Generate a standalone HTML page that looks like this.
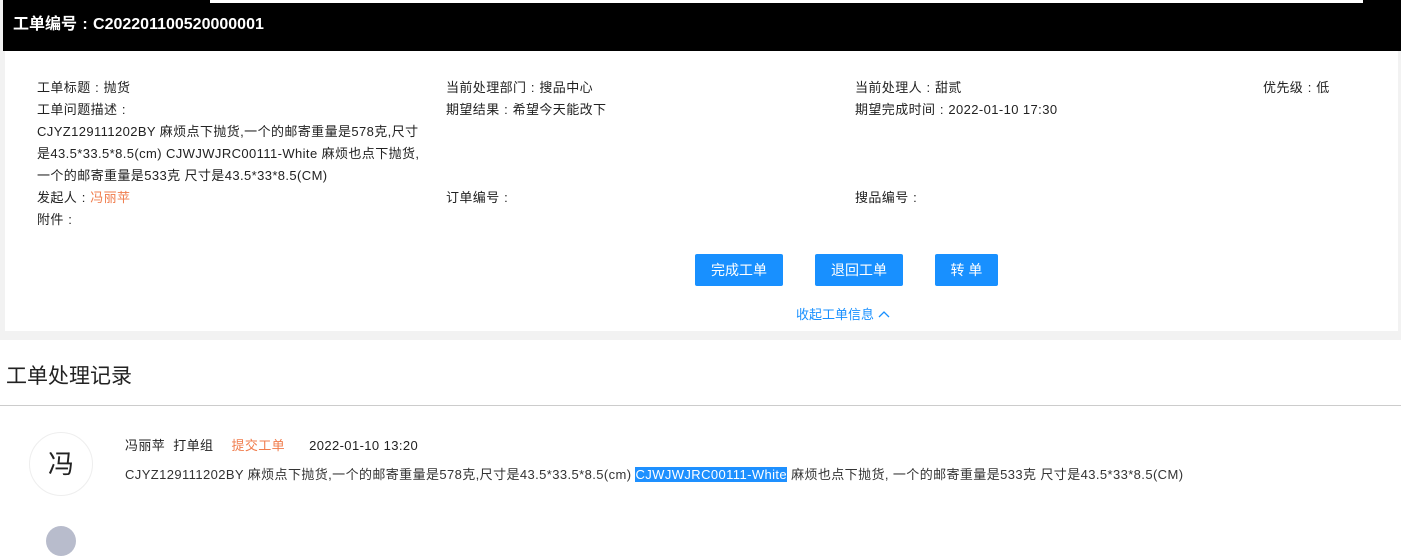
<!DOCTYPE html>
<html><head><meta charset="utf-8"><style>
*{margin:0;padding:0;box-sizing:border-box}
body{width:1401px;height:531px;overflow:hidden;background:#fff;font-family:"Liberation Sans","Noto Sans CJK SC",sans-serif;color:#222;font-size:13px;position:relative}
.a{position:absolute;white-space:nowrap}
.ls{letter-spacing:0.4px}
i{font-style:normal;display:inline-block;width:13px;text-align:center}
.top{position:absolute;left:0;top:0;width:1401px;height:340px;background:#f2f2f2}
.hdr{position:absolute;left:3px;top:0;width:1398px;height:51px;background:#000}
.strip{position:absolute;left:210px;top:0;width:1153px;height:3px;background:#fff}
.card{position:absolute;left:5px;top:51px;width:1393px;height:280px;background:#fff}
.btn{position:absolute;top:254px;height:32px;background:#1890ff;color:#fff;border-radius:2px;font-size:14px;line-height:32px;text-align:center}
</style></head><body>
<div class="top"></div>
<div class="hdr"></div><div class="strip"></div>
<div class="a" style="left:13px;top:10px;color:#fff;font-size:16px;font-weight:bold">工单编号<i style="width:16px">:</i>C202201100520000001</div>
<div class="card"></div>
<div class="a ls" style="left:37px;top:77px;line-height:22px">工单标题<i>:</i>抛货<br>工单问题描述<i>:</i><br>CJYZ129111202BY 麻烦点下抛货,一个的邮寄重量是578克,尺寸<br>是43.5*33.5*8.5(cm) CJWJWJRC00111-White 麻烦也点下抛货,<br>一个的邮寄重量是533克 尺寸是43.5*33*8.5(CM)<br>发起人<i>:</i><span style="color:#f07c4c">冯丽苹</span><br>附件<i>:</i></div>
<div class="a ls" style="left:446px;top:77px;line-height:22px">当前处理部门<i>:</i>搜品中心<br>期望结果<i>:</i>希望今天能改下</div>
<div class="a ls" style="left:446px;top:187px;line-height:22px">订单编号<i>:</i></div>
<div class="a ls" style="left:855px;top:77px;line-height:22px">当前处理人<i>:</i>甜贰<br>期望完成时间<i>:</i>2022-01-10 17:30</div>
<div class="a ls" style="left:855px;top:187px;line-height:22px">搜品编号<i>:</i></div>
<div class="a ls" style="left:1263px;top:77px;line-height:22px">优先级<i>:</i>低</div>
<div class="btn" style="left:695px;width:88px">完成工单</div>
<div class="btn" style="left:815px;width:88px">退回工单</div>
<div class="btn" style="left:935px;width:63px">转 单</div>
<div class="a" style="left:796px;top:304px;color:#1890ff">收起工单信息 <svg width="12" height="10" viewBox="0 0 12 10" style="vertical-align:0"><path d="M1 8 L6 3 L11 8" stroke="#1890ff" stroke-width="1.3" fill="none"/></svg></div>
<div class="a" style="left:6px;top:360px;font-size:21px;color:#222">工单处理记录</div>
<div class="a" style="left:0;top:405px;width:1401px;height:1px;background:#ccc"></div>
<div class="a" style="left:29px;top:432px;width:64px;height:64px;border-radius:50%;border:1px solid #eee;text-align:center;line-height:62px;font-size:26px">冯</div>
<div class="a ls" style="left:125px;top:435px">冯丽苹&nbsp; 打单组 <span style="color:#f07c4c;margin-left:14px">提交工单</span> <span style="margin-left:20px">2022-01-10 13:20</span></div>
<div class="a ls" style="left:125px;top:464px;color:#333">CJYZ129111202BY 麻烦点下抛货,一个的邮寄重量是578克,尺寸是43.5*33.5*8.5(cm) <span style="background:#1e90ff;color:#fff">CJWJWJRC00111-White</span> 麻烦也点下抛货, 一个的邮寄重量是533克 尺寸是43.5*33*8.5(CM)</div>
<div class="a" style="left:46px;top:526px;width:30px;height:30px;border-radius:50%;background:#b8bccc"></div>
</body></html>
